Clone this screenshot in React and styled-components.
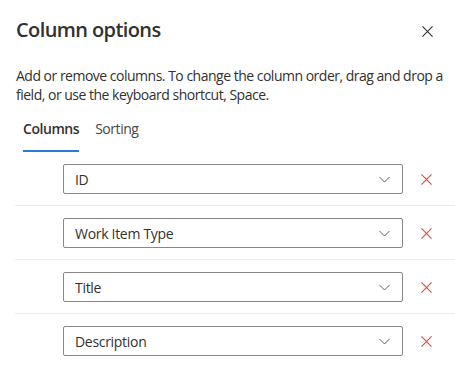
import React from "react";
import styled, { createGlobalStyle } from "styled-components";

const GlobalStyle = createGlobalStyle`
  body {
    margin: 0;
    background: #ffffff;
    font-family: "Segoe UI", "Open Sans", "Liberation Sans", sans-serif;
    color: #323130;
    overflow: hidden;
  }
`;

const Panel = styled.div`
  width: 455px;
  height: 388px;
  box-sizing: border-box;
  padding: 14px 0 0 16px;
  display: flex;
  flex-direction: column;
`;

const Header = styled.div`
  display: flex;
  align-items: center;
  justify-content: space-between;
  height: 32px;
`;

const Title = styled.h1`
  margin: 0;
  font-size: 20px;
  font-weight: 600;
  line-height: 28px;
  letter-spacing: -0.6px;
`;

const CloseButton = styled.button`
  width: 32px;
  height: 32px;
  margin-right: 12px;
  margin-top: 2px;
  border: none;
  background: transparent;
  display: flex;
  align-items: center;
  justify-content: center;
  padding: 0;
  color: #323130;
`;

const Description = styled.p`
  margin: 20px 0 0 0;
  font-size: 14px;
  line-height: 19px;
  letter-spacing: -0.5px;
  padding-right: 2px;
`;

const Tabs = styled.div`
  display: flex;
  margin: 7px 0 0 0;
  gap: 2px;
`;

const Tab = styled.div`
  position: relative;
  padding: 0 7px 7px 7px;
  height: 41px;
  box-sizing: border-box;
  display: flex;
  align-items: center;
  font-size: 14px;
  letter-spacing: -0.45px;
  font-weight: ${({ $active }) => ($active ? 600 : 400)};
  color: ${({ $active }) => ($active ? "#323130" : "#484644")};

  &::after {
    content: "";
    position: absolute;
    left: 7px;
    right: 7px;
    bottom: 0;
    height: 2px;
    background: ${({ $active }) => ($active ? "#2b7bd6" : "transparent")};
  }
`;

const List = styled.div`
  display: flex;
  flex-direction: column;
  margin-left: -1px;
`;

const Row = styled.div`
  display: flex;
  align-items: center;
  padding: 12px 0 ${({ $last }) => ($last ? "12px" : "11px")} 48px;
  border-bottom: 1px solid ${({ $last }) => ($last ? "transparent" : "#edebe9")};
`;

const Select = styled.div`
  width: 340px;
  height: 30px;
  box-sizing: border-box;
  border: 1px solid #8a8886;
  border-radius: 2px;
  display: flex;
  align-items: center;
  justify-content: space-between;
  padding: 0 12px 0 11px;
  font-size: 14px;
  letter-spacing: -0.3px;
  color: #323130;
`;

const RemoveButton = styled.button`
  width: 24px;
  height: 24px;
  margin-left: 11px;
  border: none;
  background: transparent;
  padding: 0;
  display: flex;
  align-items: center;
  justify-content: center;
`;

const Chevron = () => (
  <svg width="11" height="7" viewBox="0 0 11 7">
    <path d="M0.5 1 L5.5 6 L10.5 1" fill="none" stroke="#605e5c" strokeWidth="1" />
  </svg>
);

const Cross = ({ color, size }) => (
  <svg width={size} height={size} viewBox="0 0 12 12">
    <path d="M0.5 0.5 L11.5 11.5 M11.5 0.5 L0.5 11.5" stroke={color} strokeWidth="1.2" />
  </svg>
);

const columns = ["ID", "Work Item Type", "Title", "Description"];

export default function App() {
  return (
    <>
      <GlobalStyle />
      <Panel>
        <Header>
          <Title>Column options</Title>
          <CloseButton aria-label="Close">
            <Cross color="#323130" size={11} />
          </CloseButton>
        </Header>
        <Description>
          Add or remove columns. To change the column order, drag and drop a
          field, or use the keyboard shortcut, Space.
        </Description>
        <Tabs>
          <Tab $active>Columns</Tab>
          <Tab>Sorting</Tab>
        </Tabs>
        <List>
          {columns.map((name, i) => (
            <Row key={name} $last={i === columns.length - 1}>
              <Select>
                <span>{name}</span>
                <Chevron />
              </Select>
              <RemoveButton aria-label={`Remove ${name}`}>
                <Cross color="#e8473c" size={11} />
              </RemoveButton>
            </Row>
          ))}
        </List>
      </Panel>
    </>
  );
}
